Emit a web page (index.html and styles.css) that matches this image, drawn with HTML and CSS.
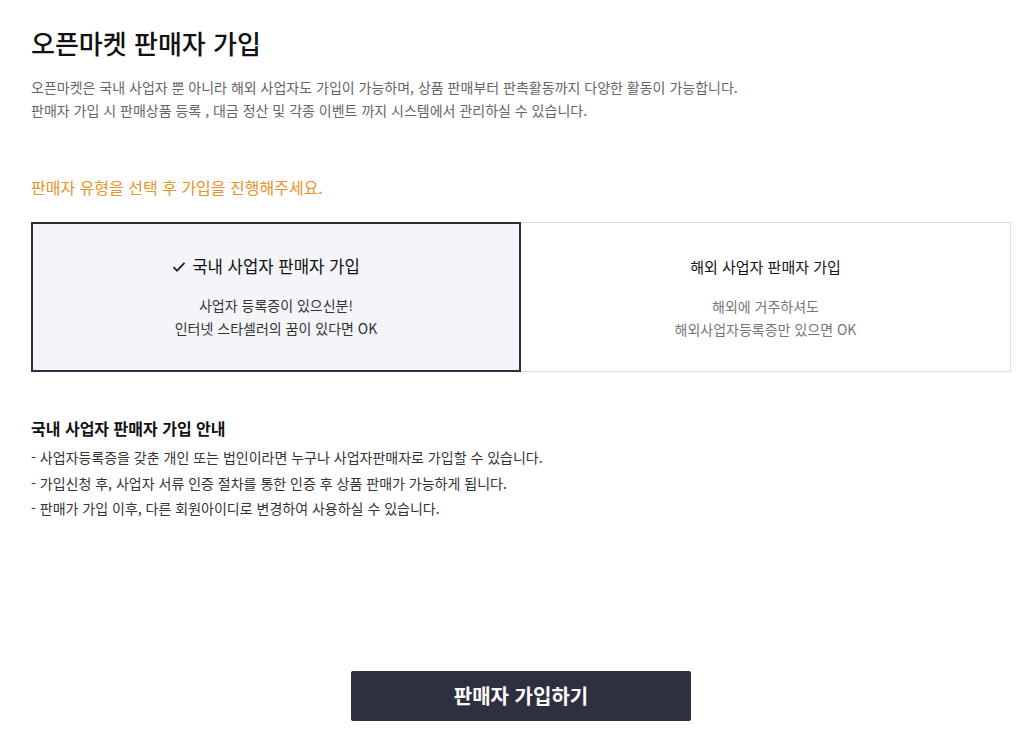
FILE: index.html
```html
<!DOCTYPE html>
<html lang="ko">
<head>
<meta charset="utf-8">
<link rel="stylesheet" href="styles.css">
</head>
<body>
<div class="page">
  <h1 class="title">오픈마켓 판매자 가입</h1>
  <p class="desc">오픈마켓은 국내 사업자 뿐 아니라 해외 사업자도 가입이 가능하며, 상품 판매부터 판촉활동까지 다양한 활동이 가능합니다.<br>판매자 가입 시 판매상품 등록 , 대금 정산 및 각종 이벤트 까지 시스템에서 관리하실 수 있습니다.</p>
  <p class="notice">판매자 유형을 선택 후 가입을 진행해주세요.</p>
  <div class="cards">
    <div class="card selected">
      <div class="card-title"><svg class="check" width="14" height="12" viewBox="0 0 14 12"><path d="M1.5 6.2 L5 9.6 L12.5 1.8" fill="none" stroke="#222" stroke-width="1.8"/></svg>국내 사업자 판매자 가입</div>
      <div class="card-sub">사업자 등록증이 있으신분!<br>인터넷 스타셀러의 꿈이 있다면 OK</div>
    </div>
    <div class="card">
      <div class="card-title">해외 사업자 판매자 가입</div>
      <div class="card-sub muted">해외에 거주하셔도<br>해외사업자등록증만 있으면 OK</div>
    </div>
  </div>
  <h2 class="guide-title">국내 사업자 판매자 가입 안내</h2>
  <ul class="guide">
    <li>- 사업자등록증을 갖춘 개인 또는 법인이라면 누구나 사업자판매자로 가입할 수 있습니다.</li>
    <li>- 가입신청 후, 사업자 서류 인증 절차를 통한 인증 후 상품 판매가 가능하게 됩니다.</li>
    <li>- 판매가 가입 이후, 다른 회원아이디로 변경하여 사용하실 수 있습니다.</li>
  </ul>
  <div class="actions">
    <button class="submit">판매자 가입하기</button>
  </div>
</div>
</body>
</html>
```
FILE: styles.css
```css
* { box-sizing: border-box; }
body {
  margin: 0;
  background: #fff;
  font-family: "Noto Sans CJK KR", "Noto Sans", sans-serif;
  color: #222;
}
.page {
  width: 980px;
  margin-left: 31px;
  padding-top: 25px;
}
.title {
  margin: 0;
  font-size: 26px;
  line-height: 36px;
  font-weight: 500;
  color: #111;
}
.desc {
  margin: 15px 0 0;
  font-size: 14px;
  line-height: 23px;
  color: #666;
}
.notice {
  margin: 54px 0 0;
  font-size: 16px;
  line-height: 22px;
  color: #e8922a;
}
.cards {
  display: flex;
  margin-top: 24px;
  height: 150px;
}
.card {
  flex: 1;
  border: 1px solid #dcdcdc;
  border-left: none;
  background: #fff;
  display: flex;
  flex-direction: column;
  align-items: center;
  padding-top: 33px;
}
.card.selected {
  flex: 0 0 490px;
  border: 2px solid #2e2f3e;
  background: #f4f5f9;
  padding-top: 31px;
}
.card-title {
  position: relative;
  font-size: 15px;
  line-height: 22px;
  color: #111;
}
.selected .card-title { font-size: 16.7px; }
.check {
  position: absolute;
  right: 100%;
  top: 6px;
  margin-right: 6px;
}
.card-sub {
  margin-top: 17px;
  font-size: 14px;
  line-height: 23px;
  text-align: center;
  color: #333;
}
.card-sub.muted { color: #777; }
.guide-title {
  margin: 46px 0 0;
  font-size: 16px;
  line-height: 20px;
  font-weight: 700;
  color: #111;
}
.guide {
  list-style: none;
  margin: 7px 0 0;
  padding: 0;
  font-size: 14px;
  line-height: 25.5px;
  color: #333;
}
.actions {
  display: flex;
  justify-content: center;
  margin-top: 149px;
}
.submit {
  width: 340px;
  height: 50px;
  border: none;
  border-radius: 2px;
  background: #2f303f;
  color: #fff;
  font-family: inherit;
  font-size: 20px;
  font-weight: 700;
}
```
